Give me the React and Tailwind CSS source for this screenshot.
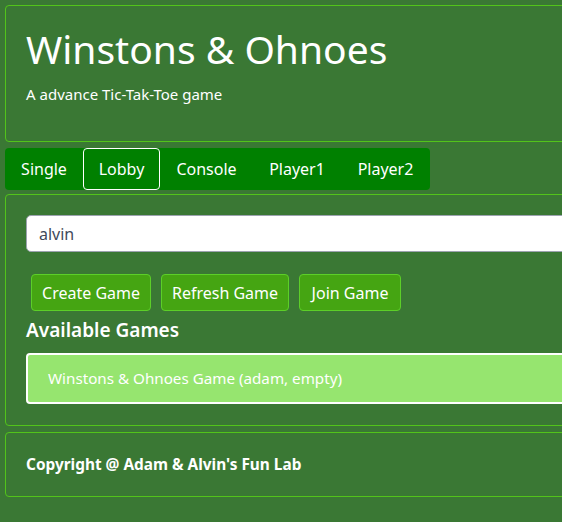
import React from "react";

const tabs = [
  { label: "Single", w: "w-[78px]" },
  { label: "Lobby", w: "w-[77px]", active: true },
  { label: "Console", w: "w-[93px]" },
  { label: "Player1", w: "w-[88px]" },
  { label: "Player2", w: "w-[89px]" },
];

export default function App() {
  return (
    <div className="min-h-screen w-full overflow-hidden bg-[#3a7834] text-white" style={{ fontFamily: '"Noto Sans", "Open Sans", sans-serif' }}>
      <div className="w-[640px] p-[5px]">
        <header className="h-[137px] rounded-[4px] border border-[#52c41a] px-5 pt-[20px]">
          <h1 className="text-[39px] leading-[46px] font-normal">Winstons &amp; Ohnoes</h1>
          <p className="mt-[11px] text-[15px] leading-[22px]">A advance Tic-Tak-Toe game</p>
        </header>

        <nav className="mt-[6px] flex w-[425px] h-[42px] rounded-[4px] bg-[#008000]">
          {tabs.map((t) => (
            <div
              key={t.label}
              className={`${t.w} flex items-center justify-center text-[16px] rounded-[4px] ${t.active ? "border border-white" : ""}`}
            >
              {t.label}
            </div>
          ))}
        </nav>

        <main className="mt-[4px] h-[232px] rounded-[4px] border border-[#52c41a] px-5 pt-5">
          <div className="h-[37px] rounded-[5px] border border-[#9ca3af] bg-white flex items-center px-3 text-[16px] text-[#3f4a5a]">
            alvin
          </div>
          <div className="mt-[22px] flex gap-[10px] pl-[5px]">
            <button className="w-[120px] h-[37px] rounded-[4px] border border-[#5ccf28] bg-[#45a512] text-[16px] text-white">Create Game</button>
            <button className="w-[128px] h-[37px] rounded-[4px] border border-[#5ccf28] bg-[#45a512] text-[16px] text-white">Refresh Game</button>
            <button className="w-[102px] h-[37px] rounded-[4px] border border-[#5ccf28] bg-[#45a512] text-[16px] text-white">Join Game</button>
          </div>
          <h2 className="mt-[6px] text-[19px] leading-[26px] font-semibold">Available Games</h2>
          <div className="mt-[10px] h-[51px] rounded-[4px] border-2 border-white bg-[#96e56f] flex items-center pl-5 text-[15.2px]">
            Winstons &amp; Ohnoes Game (adam, empty)
          </div>
        </main>

        <footer className="mt-[6px] h-[65px] rounded-[4px] border border-[#52c41a] px-5 flex items-center">
          <p className="text-[15.4px] font-bold">Copyright @ Adam &amp; Alvin's Fun Lab</p>
        </footer>
      </div>
    </div>
  );
}
